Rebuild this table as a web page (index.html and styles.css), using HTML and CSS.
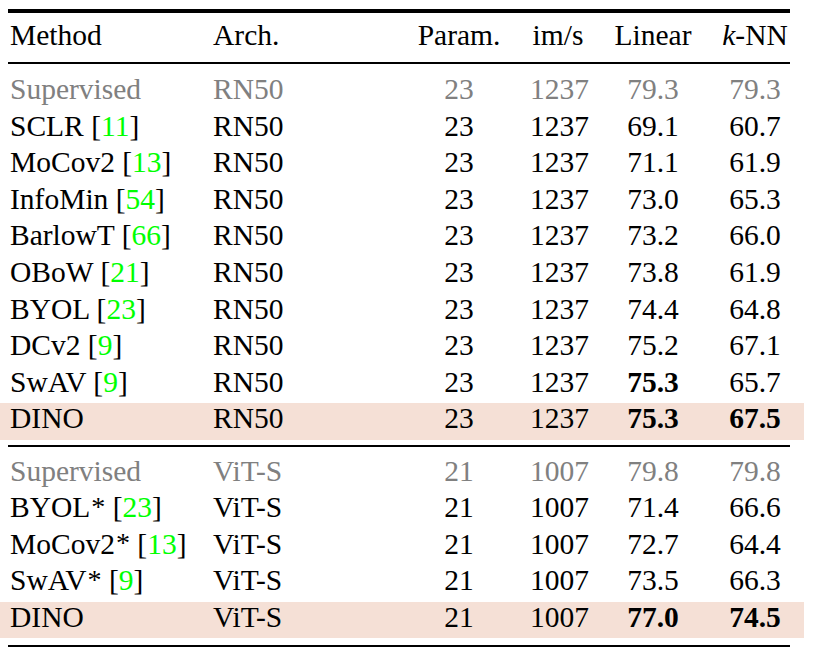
FILE: index.html
```html
<!DOCTYPE html>
<html>
<head>
<meta charset="utf-8">
<link rel="stylesheet" href="styles.css">
</head>
<body>
<div class="table">
  <div class="rule rule-top"></div>
  <div class="row head">
    <div class="c l">Method</div><div class="c l">Arch.</div><div class="c">Param.</div><div class="c">im/s</div><div class="c">Linear</div><div class="c"><i>k</i>-NN</div>
  </div>
  <div class="rule rule-mid"></div>
  <div class="section first">
    <div class="row gray"><div class="c l">Supervised</div><div class="c l">RN50</div><div class="c">23</div><div class="c">1237</div><div class="c">79.3</div><div class="c">79.3</div></div>
    <div class="row"><div class="c l">SCLR [<span class="cite">11</span>]</div><div class="c l">RN50</div><div class="c">23</div><div class="c">1237</div><div class="c">69.1</div><div class="c">60.7</div></div>
    <div class="row"><div class="c l">MoCov2 [<span class="cite">13</span>]</div><div class="c l">RN50</div><div class="c">23</div><div class="c">1237</div><div class="c">71.1</div><div class="c">61.9</div></div>
    <div class="row"><div class="c l">InfoMin [<span class="cite">54</span>]</div><div class="c l">RN50</div><div class="c">23</div><div class="c">1237</div><div class="c">73.0</div><div class="c">65.3</div></div>
    <div class="row"><div class="c l">BarlowT [<span class="cite">66</span>]</div><div class="c l">RN50</div><div class="c">23</div><div class="c">1237</div><div class="c">73.2</div><div class="c">66.0</div></div>
    <div class="row"><div class="c l">OBoW [<span class="cite">21</span>]</div><div class="c l">RN50</div><div class="c">23</div><div class="c">1237</div><div class="c">73.8</div><div class="c">61.9</div></div>
    <div class="row"><div class="c l">BYOL [<span class="cite">23</span>]</div><div class="c l">RN50</div><div class="c">23</div><div class="c">1237</div><div class="c">74.4</div><div class="c">64.8</div></div>
    <div class="row"><div class="c l">DCv2 [<span class="cite">9</span>]</div><div class="c l">RN50</div><div class="c">23</div><div class="c">1237</div><div class="c">75.2</div><div class="c">67.1</div></div>
    <div class="row"><div class="c l">SwAV [<span class="cite">9</span>]</div><div class="c l">RN50</div><div class="c">23</div><div class="c">1237</div><div class="c"><b>75.3</b></div><div class="c">65.7</div></div>
    <div class="row hl"><div class="c l">DINO</div><div class="c l">RN50</div><div class="c">23</div><div class="c">1237</div><div class="c"><b>75.3</b></div><div class="c"><b>67.5</b></div></div>
  </div>
  <div class="rule rule-sep"></div>
  <div class="section second">
    <div class="row gray"><div class="c l">Supervised</div><div class="c l">ViT-S</div><div class="c">21</div><div class="c">1007</div><div class="c">79.8</div><div class="c">79.8</div></div>
    <div class="row"><div class="c l">BYOL<sup>*</sup> [<span class="cite">23</span>]</div><div class="c l">ViT-S</div><div class="c">21</div><div class="c">1007</div><div class="c">71.4</div><div class="c">66.6</div></div>
    <div class="row"><div class="c l">MoCov2<sup>*</sup> [<span class="cite">13</span>]</div><div class="c l">ViT-S</div><div class="c">21</div><div class="c">1007</div><div class="c">72.7</div><div class="c">64.4</div></div>
    <div class="row"><div class="c l">SwAV<sup>*</sup> [<span class="cite">9</span>]</div><div class="c l">ViT-S</div><div class="c">21</div><div class="c">1007</div><div class="c">73.5</div><div class="c">66.3</div></div>
    <div class="row hl"><div class="c l">DINO</div><div class="c l">ViT-S</div><div class="c">21</div><div class="c">1007</div><div class="c"><b>77.0</b></div><div class="c"><b>74.5</b></div></div>
  </div>
  <div class="rule rule-bottom"></div>
</div>
</body>
</html>
```

FILE: styles.css
```css
html, body {
  margin: 0;
  padding: 0;
  background: #ffffff;
}

body {
  font-family: "Liberation Serif", "Times New Roman", serif;
  font-size: 29.5px;
  color: #000000;
}

.table {
  width: 804px;
  padding-top: 9px;
}

.rule {
  margin-left: 8px;
  width: 782px;
  background: #000000;
}

.rule-top {
  height: 3.5px;
}

.rule-mid {
  height: 2.3px;
  margin-top: 5.45px;
}

.rule-sep {
  height: 2px;
  margin-top: 5.5px;
}

.rule-bottom {
  height: 2.5px;
  margin-top: 6.5px;
}

.head {
  margin-top: 7.5px;
}

.section.first {
  margin-top: 10px;
}

.section.second {
  margin-top: 8.5px;
}

.row {
  display: grid;
  grid-template-columns: 205px 175px 142px 56px 134px 70px;
  padding: 0 14px 0 8px;
  height: 36.55px;
  line-height: 31.8px;
  white-space: nowrap;
}

.c {
  text-align: center;
}

.c.l {
  text-align: left;
}

.row .c:first-child {
  padding-left: 2px;
}

.gray {
  color: #808080;
}

.hl {
  background: #f5e0d6;
}

.cite {
  color: #00ff00;
}

sup {
  font-size: 0.95em;
  line-height: 0;
  vertical-align: 0.06em;
  margin-left: 1px;
}

b {
  font-weight: bold;
}

i {
  font-style: italic;
}
```
